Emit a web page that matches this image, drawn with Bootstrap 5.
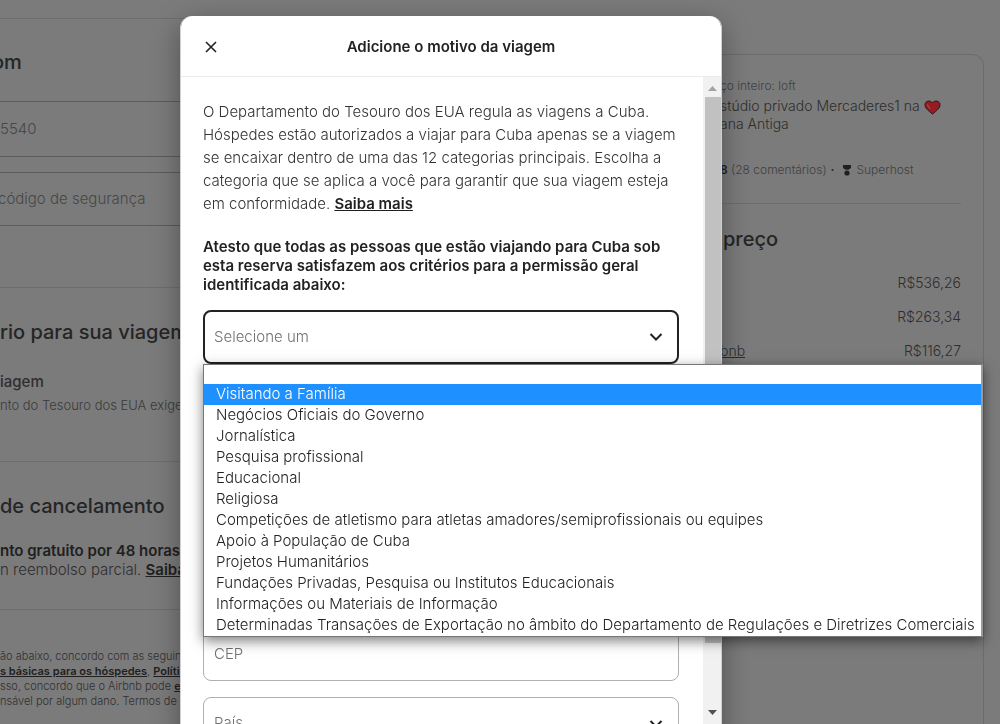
<!DOCTYPE html>
<html lang="pt-BR">
<head>
<meta charset="utf-8">
<meta name="viewport" content="width=device-width, initial-scale=1">
<title>Adicione o motivo da viagem</title>
<link href="https://cdn.jsdelivr.net/npm/bootstrap@5.3.0/dist/css/bootstrap.min.css" rel="stylesheet">
<style>
  body { font-family: Inter, "Liberation Sans", sans-serif; font-size: 15px; font-weight: 300; color: #222; background: #7b7b7b; height: 100vh; overflow: hidden; }
  a { color: inherit; }
  a:hover { color: #000; }
  h1, h2 { margin: 0; }

  /* checkout page under the dialog */
  .checkout { color: #2e2e2e; }
  .payment { flex: 1; white-space: nowrap; overflow: hidden; padding-top: 18px; }
  .rule { border-top: 1px solid #6e6e6e; }
  .page-title { font-size: 20px; line-height: 26px; font-weight: 500; color: #252525; }
  .card-title-cut { margin: 30px 0 26px -8px; }
  .field-dim { display: block; width: 100%; height: 56px; background: transparent; border: solid #5c5c5c; border-width: 1px 0; padding: 0 0 2px; font-weight: 300; color: #474747; }
  .field-dim::placeholder { color: #474747; opacity: 1; }
  .field-dim.short { height: 54px; margin: 15px 0 61px -2px; }
  .section-head { margin-top: 31px; }
  .need { margin-top: 25px; line-height: 24px; font-weight: 500; }
  .note { font-size: 13px; line-height: 20px; margin: 1px 0 46px; color: #3a3a3a; }
  .refund { margin: 22px 0 30px; line-height: 19px; }
  .fine { font-size: 11px; line-height: 15px; margin-top: 39px; color: #303030; }
  .strong-text { font-weight: 600; color: #1f1f1f; }

  .summary { width: 278px; margin: 54px 16px 0 0; padding: 21px 22px 0 13px; border: 1px solid #6c6c6c; border-bottom: 0; border-radius: 12px 12px 0 0; white-space: nowrap; }
  .small-line { font-size: 12px; line-height: 20px; color: #404040; }
  .rating { margin: 27px 0 23px; height: 20px; }
  .listing { font-size: 14px; line-height: 18px; padding-top: 1px; }
  .price-head { margin: 22px 0 19px 3px; }
  .price-row { line-height: 24px; margin-bottom: 10px; font-size: 14px; }

  /* dialog */
  .trip-modal { margin: 16px 0 0 180px; width: 542px; max-width: none; }
  .trip-modal .modal-content { border: 1px solid #d0d0d0; border-width: 0 1px; border-radius: 12px; box-shadow: 0 8px 28px rgba(0,0,0,.35); color: #222; }
  .trip-modal .modal-header { height: 61px; padding: 1px 22px 0; border-bottom: 1px solid #ebebeb; }
  .close-btn { width: 16px; height: 16px; padding: 0; border: 0; background: none; line-height: 0; }
  .trip-modal .modal-title { font-size: 15px; line-height: 20px; font-weight: 600; }
  .trip-body { flex: 1; padding: 23px 24px 0 22px; }
  .intro { line-height: 23px; margin-bottom: 22px; color: #333; }
  .attest { font-size: 15px; line-height: 19px; font-weight: 600; margin-bottom: 16px; }
  .trip-field { display: block; width: 100%; height: 54px; border: 1px solid #b0b0b0; border-radius: 8px; padding: 0 10px; font-size: 15px; font-weight: 300; color: #717171; background-color: #fff; }
  .trip-field::placeholder { color: #717171; opacity: 1; }
  select.trip-field { appearance: none; background-image: url("data:image/svg+xml,%3Csvg xmlns='http://www.w3.org/2000/svg' viewBox='0 0 14 10'%3E%3Cpath d='M1.5 2 7 7.5 12.5 2' fill='none' stroke='%23222' stroke-width='2'/%3E%3C/svg%3E"); background-repeat: no-repeat; background-position: right 15px center; background-size: 14px 10px; }
  select.trip-field.active { border: 2px solid #222; padding: 0 9px; background-position: right 14px center; }
  .address-fields { margin-top: 263px; display: grid; gap: 16px; }
  .address-fields .trip-field { padding-bottom: 2px; }

  .option-list { position: absolute; top: 100%; left: 0; width: 780px; margin: 0; padding: 19px 0 0; list-style: none; background: #fff; border: 1px solid #767676; border-right: 2px solid #9a9a9a; box-shadow: 0 4px 12px rgba(0,0,0,.5); color: #222; z-index: 5; white-space: nowrap; }
  .option-list li { height: 21px; line-height: 20px; padding-left: 12px; }
  .option-list li.picked { background: #1e90ff; color: #fff; }

  .scroll-track { width: 18px; background: #f1f1f1; display: flex; flex-direction: column; padding: 9px 1px 0 2px; align-items: center; }
  .scroll-thumb { width: 16px; height: 546px; margin: 6px 0 67px; background: #c1c1c1; }
</style>
</head>
<body>
<div class="checkout d-flex vh-100 overflow-hidden">
  <main class="payment">
    <div class="rule"></div>
    <h2 class="page-title card-title-cut">om</h2>
    <input class="field-dim" type="text" value="5540" aria-label="Número do cartão">
    <input class="field-dim short" type="text" placeholder="código de segurança" aria-label="Código de segurança">
    <div class="rule"></div>
    <h2 class="page-title section-head">rio para sua viagem</h2>
    <div class="need">iagem</div>
    <div class="note">nto do Tesouro dos EUA exige</div>
    <div class="rule"></div>
    <h2 class="page-title section-head">de cancelamento</h2>
    <div class="refund"><span class="strong-text">nto gratuito por 48 horas</span><br>n reembolso parcial. <a class="strong-text" href="#">Saiba mais</a></div>
    <div class="rule"></div>
    <div class="fine">ão abaixo, concordo com as seguintes<br><a class="strong-text" href="#">s básicas para os hóspedes</a>, <a class="strong-text" href="#">Política</a><br>sso, concordo que o Airbnb pode <a class="strong-text" href="#">enviar</a><br>nsável por algum dano. Termos de Pagamento</div>
  </main>
  <aside class="summary flex-shrink-0">
    <div class="small-line">ço inteiro: loft</div>
    <div class="listing">stúdio privado Mercaderes1 na
      <svg width="17" height="15" viewBox="0 0 17 15" aria-hidden="true"><path d="M8.500 14C4 10.500 1 8 1 4.600 1 1 6.300-.4 8.500 3 10.700-.4 16 1 16 4.600 16 8 13 10.500 8.500 14Z" fill="#951d22" stroke="#2c1516"/><path d="M3.500 4.500q.4 2 2.500 4" fill="none" stroke="#c05558"/></svg><br>ana Antiga</div>
    <div class="small-line rating d-flex align-items-center"><span class="strong-text">8</span>&nbsp;(28 comentários)
      <span class="mx-1 strong-text">·</span>
      <svg class="ms-1" width="10" height="13" viewBox="0 0 10 13" fill="#202020" aria-hidden="true"><path d="M1 1h8v3L6.500 5.700h-3L1 4Z"/><circle cx="5" cy="9" r="2.600"/></svg>
      <span class="ms-1">Superhost</span></div>
    <div class="rule"></div>
    <h2 class="page-title price-head">preço</h2>
    <div class="price-row text-end">R$536,26</div>
    <div class="price-row text-end">R$263,34</div>
    <div class="price-row d-flex justify-content-between"><a href="#">bnb</a><span>R$116,27</span></div>
  </aside>
</div>

<div class="modal d-block overflow-hidden" tabindex="-1" role="dialog" aria-labelledby="tripTitle">
  <div class="modal-dialog trip-modal">
    <div class="modal-content">
      <div class="modal-header">
        <button class="close-btn" type="button" aria-label="Fechar"><svg width="16" height="16" viewBox="0 0 16 16"><path d="M3 3l10 10M13 3 3 13" stroke="#222" stroke-width="1.600" fill="none"/></svg></button>
        <h1 class="modal-title flex-fill text-center pe-3" id="tripTitle">Adicione o motivo da viagem</h1>
      </div>
      <div class="d-flex">
        <div class="trip-body">
          <p class="intro">O Departamento do Tesouro dos EUA regula as viagens a Cuba.<br>Hóspedes estão autorizados a viajar para Cuba apenas se a viagem<br>se encaixar dentro de uma das 12 categorias principais. Escolha a<br>categoria que se aplica a você para garantir que sua viagem esteja<br>em conformidade. <a class="strong-text" href="#">Saiba mais</a></p>
          <label class="attest d-block" for="reason">Atesto que todas as pessoas que estão viajando para Cuba sob<br>esta reserva satisfazem aos critérios para a permissão geral<br>identificada abaixo:</label>
          <div class="position-relative">
            <select class="trip-field active" id="reason"><option>Selecione um</option></select>
            <ul class="option-list" role="listbox" aria-label="Motivo da viagem">
              <li class="picked">Visitando a Família</li>
              <li>Negócios Oficiais do Governo</li>
              <li>Jornalística</li>
              <li>Pesquisa profissional</li>
              <li>Educacional</li>
              <li>Religiosa</li>
              <li>Competições de atletismo para atletas amadores/semiprofissionais ou equipes</li>
              <li>Apoio à População de Cuba</li>
              <li>Projetos Humanitários</li>
              <li>Fundações Privadas, Pesquisa ou Institutos Educacionais</li>
              <li>Informações ou Materiais de Informação</li>
              <li>Determinadas Transações de Exportação no âmbito do Departamento de Regulações e Diretrizes Comerciais</li>
            </ul>
          </div>
          <div class="address-fields">
            <input class="trip-field" type="text" placeholder="CEP" aria-label="CEP">
            <select class="trip-field" aria-label="País"><option>País</option></select>
          </div>
        </div>
        <div class="scroll-track" aria-hidden="true">
          <svg width="9" height="5" viewBox="0 0 9 5"><path d="M0 5 4.500 0 9 5Z" fill="#a3a3a3"/></svg>
          <div class="scroll-thumb"></div>
          <svg width="9" height="5" viewBox="0 0 9 5"><path d="M0 0 4.500 5 9 0Z" fill="#505050"/></svg>
        </div>
      </div>
    </div>
  </div>
</div>
<script src="https://cdn.jsdelivr.net/npm/bootstrap@5.3.0/dist/js/bootstrap.bundle.min.js"></script>
</body>
</html>
